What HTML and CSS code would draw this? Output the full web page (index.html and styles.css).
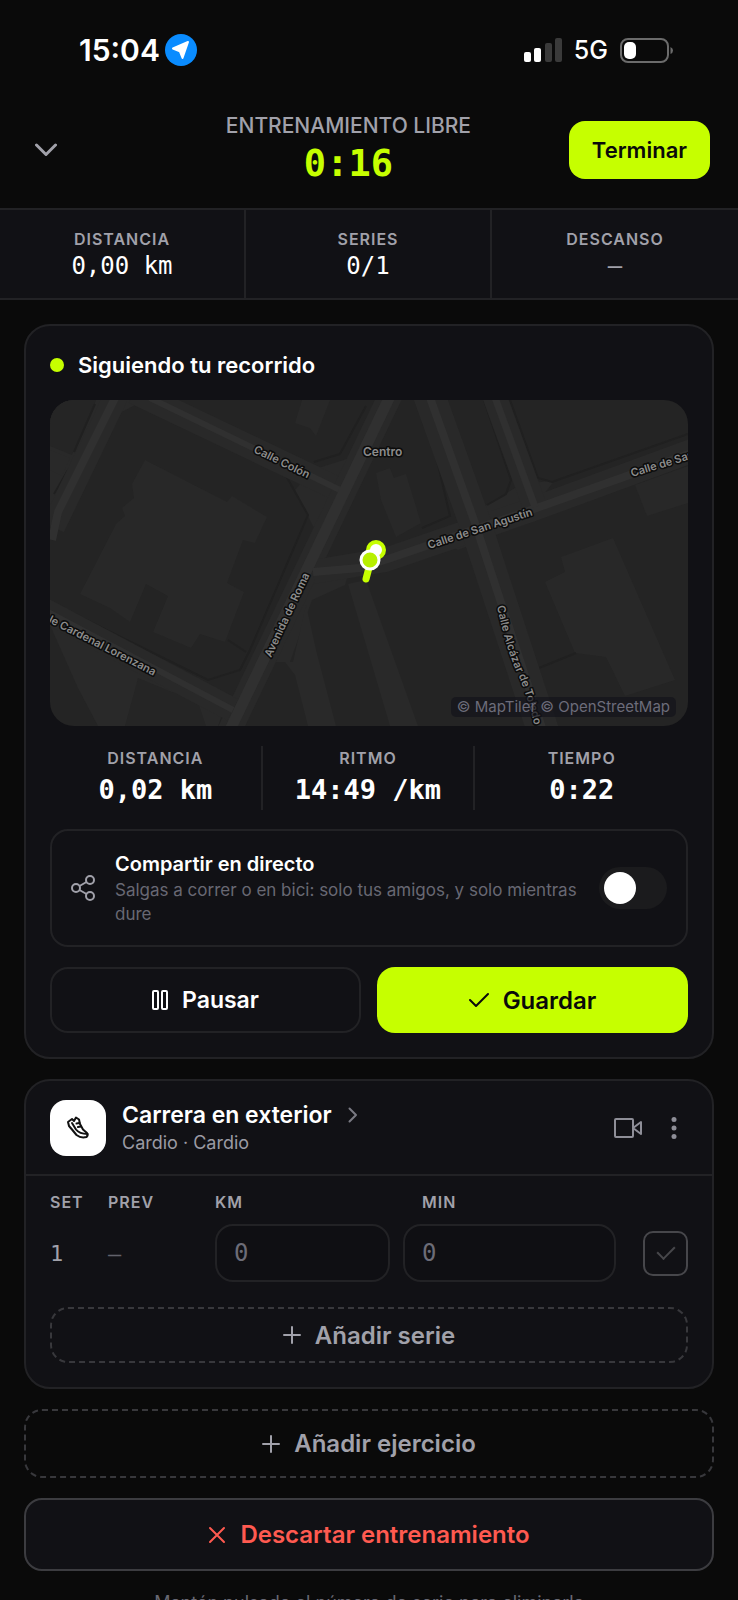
FILE: index.html
```html
<!DOCTYPE html>
<html lang="es">
<head>
  <meta charset="UTF-8" />
  <meta name="viewport" content="width=device-width, initial-scale=1" />
  <title>Entrenamiento libre</title>
  <link rel="stylesheet" href="styles.css">
</head>
<body>
  <div class="status-bar">
    <div class="status-group">
      <span class="clock">15:04</span>
      <svg class="location" width="32" height="32" viewBox="0 0 32 32">
        <circle cx="16" cy="16" r="16" fill="#0a8cff"/>
        <path d="M23 8 L17.5 24 L14.800 17.200 L8 14.500 Z" fill="#fff" stroke="#fff" stroke-width="2" stroke-linejoin="round"/>
      </svg>
    </div>
    <div class="status-group status-right">
      <svg width="38" height="24" viewBox="0 0 38 24">
        <rect x="0" y="14" width="7" height="10" rx="2" fill="#fff"/>
        <rect x="10" y="10" width="7" height="14" rx="2" fill="#fff"/>
        <rect x="21" y="5" width="7" height="19" rx="2" fill="#3a3a3a"/>
        <rect x="31" y="0" width="7" height="24" rx="2" fill="#3a3a3a"/>
      </svg>
      <span class="network">5G</span>
      <svg width="54" height="25" viewBox="0 0 54 25">
        <rect x="1" y="1" width="47" height="23" rx="7" fill="none" stroke="#6b6b6b" stroke-width="2"/>
        <rect x="4" y="4" width="12" height="17" rx="5" fill="#fff"/>
        <path d="M50.500 9 Q53 10 53 12.500 Q53 15 50.500 16 Z" fill="#6b6b6b"/>
      </svg>
    </div>
  </div>

  <header class="top">
    <button class="collapse" aria-label="Minimizar">
      <svg width="22" height="14" viewBox="0 0 22 14"><path d="M1.500 2 L11 11.500 L20.500 2" fill="none" stroke="currentColor" stroke-width="3" stroke-linecap="round" stroke-linejoin="round"/></svg>
    </button>
    <div class="top-title">
      <h1>ENTRENAMIENTO LIBRE</h1>
      <div class="timer">0:16</div>
    </div>
    <button class="finish">Terminar</button>
  </header>

  <section class="summary">
    <div><span class="label">DISTANCIA</span><span class="value">0,00 km</span></div>
    <div><span class="label">SERIES</span><span class="value">0/1</span></div>
    <div><span class="label">DESCANSO</span><span class="value muted">–</span></div>
  </section>

  <main>
    <section class="card tracking">
      <h2><span class="dot"></span>Siguiendo tu recorrido</h2>

      <div class="map">
        <svg viewBox="0 0 638 326" preserveAspectRatio="xMidYMid slice">
          <rect width="638" height="326" fill="#242424"/>
          <!-- open ground -->
          <g fill="#292929">
            <path d="M0 0 H95 L60 18 L20 90 L0 128 Z"/>
            <path d="M0 225 L80 262 L175 306 L168 326 H48 L28 288 Z"/>
            <path d="M245 90 L262 70 L300 58 L290 95 L264 128 Z"/>
            <path d="M255 160 L300 168 L295 185 L262 200 L240 262 L226 262 Z"/>
            <path d="M235 262 L243 262 L256 205 L266 250 L286 326 H258 L245 275 Z"/>
            <path d="M298 184 L316 180 L368 326 H340 Z"/>
            <path d="M388 138 L432 108 L470 85 L505 80 L470 124 L408 150 Z"/>
            <path d="M0 50 L20 58 L12 76 L0 70 Z"/>
          </g>
          <!-- blocks over the ground -->
          <g fill="#252525">
            <path d="M0 0 H46 L22 55 L0 46 Z"/>
            <path d="M88 278 L122 292 L146 296 L156 326 H75 Z"/>
          </g>
          <!-- buildings -->
          <g fill="#282828">
            <path d="M95 60 L177 102 L182 96 L217 117 L205 143 L193 140 L177 183 L194 192 L175 242 L150 234 L141 248 L103 232 L118 196 L96 184 L80 222 L60 208 L30 194 L66 124 L75 116 L72 108 L84 98 L82 84 Z"/>
            <path d="M252 0 H280 L266 36 L260 28 L245 23 Z"/>
            <path d="M326 73 L340 68 L344 78 L356 74 L371 123 L346 137 L331 100 Z"/>
            <path d="M563 138 L625 280 L575 296 L556 257 L525 253 L495 182 L515 172 L511 157 Z"/>
            <path d="M585 85 L638 66 V103 L597 116 Z"/>
          </g>
          <g fill="none" stroke="#202020" stroke-width="2">
            <path d="M107 12 L235 74 L258 115 L200 250 L190 270 L158 280 L20 212"/>
            <path d="M264 62 L290 54 L316 6"/>
            <path d="M373 0 L400 116 L372 128"/>
            <path d="M437 105 L456 94 L461 80 L434 0"/>
            <path d="M638 34 L502 82 L488 78 L460 0"/>
            <path d="M45 4 L24 52 M18 70 L4 94"/>
            <path d="M178 240 L196 252"/>
            <path d="M526 253 L484 270"/>
          </g>
          <!-- streets -->
          <g fill="none" stroke="#292929" stroke-width="24">
            <path d="M68 -8 L3 127"/>
            <path d="M84 -8 L290 90"/>
            <path d="M342 -8 L178 334"/>
            <path d="M-6 210 L183 310"/>
            <path d="M263 172 L335 160 L481 110 L644 50"/>
            <path d="M378 -8 L425 123 L494 334" stroke-width="32"/>
            <path d="M443 -8 L485 107"/>
          </g>
          <g fill="none" stroke="#303030" stroke-width="8" stroke-linejoin="round">
            <path d="M68 -8 L8 112 L2 140"/>
            <path d="M100 -2 L290 90" stroke-width="6"/>
            <path d="M342 -8 L178 334" stroke-width="11"/>
            <path d="M-6 210 L183 310" stroke-width="6"/>
            <path d="M263 172 L310 168 L335 160 L481 110 L644 52"/>
            <path d="M378 -8 L425 123 L494 334"/>
            <path d="M443 -8 L485 107" stroke-width="7"/>
          </g>
          <defs>
            <path id="alcazar" d="M447 206 Q456 250 469 277 Q479 300 488 340"/>
          </defs>
          <g class="streets">
            <text transform="translate(203 52) rotate(26)">Calle Colón</text>
            <text transform="translate(-2 222) rotate(27)">le Cardenal Lorenzana</text>
            <text transform="translate(221 258) rotate(-65)">Avenida de Roma</text>
            <text transform="translate(379 149) rotate(-18)">Calle de San Agustín</text>
            <text transform="translate(582 77) rotate(-17)">Calle de San</text>
            <text><textPath href="#alcazar">Calle Alcázar de Toledo</textPath></text>
            <text class="district" x="313" y="56">Centro</text>
          </g>
          <!-- route -->
          <path d="M321 160 L316 179" stroke="#c6ff00" stroke-width="7" stroke-linecap="round"/>
          <circle cx="326" cy="150" r="8" fill="#fff" stroke="#c6ff00" stroke-width="4"/>
          <circle cx="320" cy="160" r="9" fill="#b8f000" stroke="#fff" stroke-width="3"/>
        </svg>
        <span class="credits">© MapTiler © OpenStreetMap</span>
      </div>

      <div class="live-stats">
        <div><span class="label">DISTANCIA</span><span class="value">0,02 km</span></div>
        <div><span class="label">RITMO</span><span class="value">14:49 /km</span></div>
        <div><span class="label">TIEMPO</span><span class="value">0:22</span></div>
      </div>

      <div class="share">
        <svg width="24" height="26" viewBox="0 0 24 26" fill="none" stroke="currentColor" stroke-width="2">
          <circle cx="5" cy="13" r="4"/>
          <circle cx="19" cy="5" r="4"/>
          <circle cx="19" cy="21" r="4"/>
          <path d="M8.500 11 L15.500 7 M8.500 15 L15.500 19"/>
        </svg>
        <label class="share-text" for="share-live">
          <strong>Compartir en directo</strong>
          <span>Salgas a correr o en bici: solo tus amigos, y solo mientras dure</span>
        </label>
        <input class="toggle" type="checkbox" role="switch" id="share-live">
      </div>

      <div class="actions">
        <button class="pause">
          <svg width="16" height="20" viewBox="0 0 16 20" fill="none" stroke="currentColor" stroke-width="2"><rect x="1" y="1" width="5" height="18" rx="1"/><rect x="10" y="1" width="5" height="18" rx="1"/></svg>
          Pausar
        </button>
        <button class="save">
          <svg width="20" height="16" viewBox="0 0 20 16" fill="none" stroke="currentColor" stroke-width="2" stroke-linecap="round" stroke-linejoin="round"><path d="M1 8 L7 14 L19 2"/></svg>
          Guardar
        </button>
      </div>
    </section>

    <section class="card exercise">
      <div class="exercise-head">
        <div class="thumb">
          <svg width="24" height="24" viewBox="0 0 24 24" fill="none" stroke="#111" stroke-width="2" stroke-linejoin="round" stroke-linecap="round">
            <path d="M2 6 L6 3 L8 5 L10 1.500 L13 3.500 L14 8 L17 13.500 L21 17 Q22.500 19 20.500 21 Q15 22.500 10.500 19 L6 13.500 L3 10 Z"/>
            <path d="M6 7 L10 13.500 Q13.500 18 21.500 18 M10.500 7.500 L13.500 7 M12 11 L15 10.500"/>
          </svg>
        </div>
        <div class="exercise-name">
          <h2><a href="#">Carrera en exterior
            <svg width="10" height="16" viewBox="0 0 10 16"><path d="M1.500 1.500 L8 8 L1.500 14.500" fill="none" stroke="currentColor" stroke-width="2" stroke-linecap="round" stroke-linejoin="round"/></svg></a></h2>
          <p>Cardio · Cardio</p>
        </div>
        <button class="icon-btn" aria-label="Vídeo">
          <svg width="28" height="20" viewBox="0 0 28 20" fill="none" stroke="currentColor" stroke-width="2" stroke-linejoin="round"><rect x="1" y="1" width="18" height="18" rx="1"/><path d="M19 10 L27 4 V16 Z"/></svg>
        </button>
        <button class="icon-btn" aria-label="Más opciones">
          <svg width="6" height="24" viewBox="0 0 6 24" fill="currentColor"><circle cx="3" cy="3.500" r="2.500"/><circle cx="3" cy="12" r="2.500"/><circle cx="3" cy="20.500" r="2.500"/></svg>
        </button>
      </div>

      <div class="exercise-body">
        <table>
          <thead>
            <tr>
              <th class="col-set">SET</th>
              <th class="col-prev">PREV</th>
              <th class="col-km">KM</th>
              <th class="col-min">MIN</th>
              <th class="col-done"></th>
            </tr>
          </thead>
          <tbody>
            <tr>
              <td>1</td>
              <td class="prev">–</td>
              <td class="cell-km"><input class="field" type="text" placeholder="0" aria-label="Km"></td>
              <td class="cell-min"><input class="field" type="text" placeholder="0" aria-label="Min"></td>
              <td class="cell-done"><input class="done" type="checkbox" aria-label="Serie completada"></td>
            </tr>
          </tbody>
        </table>
        <button class="add add-set">
          <svg width="18" height="18" viewBox="0 0 18 18" stroke="currentColor" stroke-width="2" stroke-linecap="round"><path d="M9 1 V17 M1 9 H17"/></svg>
          Añadir serie
        </button>
      </div>
    </section>

    <button class="add add-exercise">
      <svg width="18" height="18" viewBox="0 0 18 18" stroke="currentColor" stroke-width="2" stroke-linecap="round"><path d="M9 1 V17 M1 9 H17"/></svg>
      Añadir ejercicio
    </button>

    <button class="discard">
      <svg width="18" height="18" viewBox="0 0 18 18" stroke="currentColor" stroke-width="2" stroke-linecap="round"><path d="M2 2 L16 16 M16 2 L2 16"/></svg>
      Descartar entrenamiento
    </button>

    <p class="hint">Mantén pulsado el número de serie para eliminarla</p>
  </main>
</body>
</html>
```
FILE: styles.css
```css
* {
  box-sizing: border-box;
}

html {
  background: #0a0a0a;
}

body {
  margin: 0;
  height: 100vh;
  overflow: hidden;
  background: #0a0a0a;
  color: #fff;
  font-family: Inter, "Liberation Sans", sans-serif;
}

h1, h2, p {
  margin: 0;
}

svg {
  display: block;
  flex: none;
}

button {
  font: inherit;
  color: inherit;
  background: none;
  border: none;
  padding: 0;
  cursor: pointer;
}

/* Status bar */
.status-bar {
  display: flex;
  justify-content: space-between;
  align-items: center;
  height: 100px;
  padding: 0 64px 0 79px;
}

.status-group {
  display: flex;
  align-items: center;
  gap: 5px;
}

.status-right {
  gap: 12px;
}

.clock {
  font-size: 30px;
  font-weight: 600;
}

.network {
  font-size: 25px;
  font-weight: 500;
}

/* Header */
.top {
  display: grid;
  grid-template-columns: 104px 1fr auto;
  align-items: center;
  height: 108px;
  padding: 0 28px 8px 24px;
}

.collapse {
  display: flex;
  align-items: center;
  height: 48px;
  padding-left: 11px;
  color: #a1a1aa;
}

.top-title {
  text-align: center;
}

.top-title h1 {
  font-size: 21px;
  font-weight: 500;
  line-height: 28px;
  color: #a1a1aa;
}

.timer {
  font-family: "DejaVu Sans Mono", "Liberation Mono", monospace;
  font-size: 37px;
  font-weight: 700;
  line-height: 48px;
  color: #c6ff00;
}

.finish {
  height: 58px;
  padding: 0 23px;
  border-radius: 16px;
  background: #c6ff00;
  color: #0a0a0a;
  font-size: 22px;
  font-weight: 600;
}

/* Summary strip */
.label {
  display: block;
  font-size: 16px;
  font-weight: 600;
  line-height: 24px;
  letter-spacing: 1px;
  color: #a1a1aa;
}

.value {
  display: block;
  font-family: "DejaVu Sans Mono", "Liberation Mono", monospace;
  font-size: 24px;
  line-height: 30px;
}

.summary {
  display: grid;
  grid-template-columns: repeat(3, 1fr);
  background: #111115;
  border-top: 2px solid #222225;
  border-bottom: 2px solid #222225;
  text-align: center;
}

.summary > div {
  padding: 17px 0;
}

.summary > div:not(:last-child) {
  border-right: 2px solid #222225;
}

.muted {
  color: #a1a1aa;
}

/* Cards */
main {
  display: flex;
  flex-direction: column;
  gap: 20px;
  padding: 24px 24px 0;
}

.card {
  background: #111115;
  border: 2px solid #222225;
  border-radius: 26px;
}

.tracking {
  padding: 24px;
}

.tracking h2 {
  display: flex;
  align-items: center;
  gap: 14px;
  font-size: 22px;
  font-weight: 600;
  line-height: 30px;
}

.dot {
  width: 14px;
  height: 14px;
  border-radius: 50%;
  background: #c6ff00;
}

.map {
  position: relative;
  height: 326px;
  margin-top: 20px;
  border-radius: 24px;
  overflow: hidden;
}

.map svg {
  width: 100%;
  height: 100%;
}

.streets {
  font-size: 11px;
  font-weight: 600;
  fill: #8c8c8c;
  stroke: #0c0c0c;
  stroke-width: 3px;
  stroke-linejoin: round;
  paint-order: stroke;
}

.district {
  font-size: 12px;
}

.credits {
  position: absolute;
  right: 12px;
  bottom: 9px;
  padding: 0 6px;
  border-radius: 5px;
  background: rgba(20, 20, 27, 0.7);
  color: #6c6c7a;
  font-size: 15px;
  line-height: 20px;
}

.live-stats {
  display: grid;
  grid-template-columns: repeat(3, 1fr);
  margin-top: 20px;
  text-align: center;
}

.live-stats > div:not(:last-child) {
  border-right: 2px solid #222225;
}

.live-stats .value {
  font-size: 27px;
  font-weight: 700;
  line-height: 40px;
}

.share {
  display: flex;
  align-items: center;
  margin-top: 19px;
  padding: 19px;
  border: 2px solid #222225;
  border-radius: 18px;
  color: #a1a1aa;
}

.share-text {
  flex: 1;
  margin: 0 16px 0 20px;
  font-size: 17px;
  line-height: 24px;
  color: #686873;
}

.share-text strong {
  display: block;
  font-size: 20px;
  font-weight: 600;
  line-height: 28px;
  color: #fff;
}

.share-text span {
  display: block;
}

.toggle {
  appearance: none;
  flex: none;
  width: 68px;
  height: 42px;
  margin: 0;
  padding: 5px;
  border-radius: 21px;
  background: #1b1b1d;
}

.toggle::before {
  content: "";
  display: block;
  width: 32px;
  height: 32px;
  border-radius: 50%;
  background: #fff;
}

.toggle:checked {
  background: #c6ff00;
}

.toggle:checked::before {
  margin-left: auto;
}

.actions {
  display: grid;
  grid-template-columns: 1fr 1fr;
  gap: 16px;
  margin-top: 20px;
}

.pause, .save, .add, .discard {
  display: flex;
  align-items: center;
  justify-content: center;
  gap: 14px;
  width: 100%;
  height: 66px;
  border-radius: 18px;
  font-size: 24px;
  font-weight: 600;
}

.pause {
  border: 2px solid #222225;
  font-size: 23px;
}

.save {
  background: #c6ff00;
  color: #0a0a0a;
}

/* Exercise */
.exercise-head {
  display: flex;
  align-items: center;
  height: 95px;
  padding: 0 24px;
  border-bottom: 2px solid #222225;
}

.thumb {
  display: flex;
  align-items: center;
  justify-content: center;
  width: 56px;
  height: 56px;
  border-radius: 16px;
  background: #fff;
}

.exercise-name {
  flex: 1;
  margin-left: 16px;
}

.exercise-name h2 {
  font-size: 23px;
  font-weight: 600;
  line-height: 30px;
}

.exercise-name a {
  display: flex;
  align-items: center;
  gap: 16px;
  color: #fff;
  text-decoration: none;
}

.exercise-name a svg {
  color: #7a7a83;
}

.exercise-name p {
  font-size: 18px;
  line-height: 26px;
  color: #9b9ba4;
}

.icon-btn {
  display: flex;
  align-items: center;
  justify-content: center;
  width: 28px;
  height: 48px;
  margin-left: 18px;
  color: #8e8e97;
}

.exercise-body {
  padding: 14px 24px 24px;
}

table {
  width: 100%;
  table-layout: fixed;
  border-collapse: collapse;
}

th {
  padding: 0;
  font-size: 16px;
  font-weight: 600;
  line-height: 24px;
  letter-spacing: 1px;
  text-align: left;
  color: #a1a1aa;
}

td {
  padding: 10px 0 0;
  font-family: "DejaVu Sans Mono", "Liberation Mono", monospace;
  font-size: 22px;
  color: #a1a1aa;
}

.col-set {
  width: 58px;
}

.col-prev {
  width: 107px;
}

.col-km {
  width: 188px;
}

.col-min {
  padding-left: 19px;
}

.col-done {
  width: 72px;
}

.prev {
  color: #62626b;
}

.cell-km {
  padding-right: 13px;
}

.field {
  display: block;
  width: 100%;
  height: 58px;
  padding: 0 17px;
  border: 2px solid #222225;
  border-radius: 18px;
  background: #0f0f13;
  color: #fff;
  font-family: inherit;
  font-size: 24px;
}

.field::placeholder {
  color: #6c6c77;
}

.done {
  appearance: none;
  display: flex;
  align-items: center;
  justify-content: center;
  width: 45px;
  height: 45px;
  margin: 0 0 0 auto;
  border: 2px solid #47474b;
  border-radius: 10px;
}

.done::before {
  content: "";
  width: 8px;
  height: 15px;
  margin-bottom: 5px;
  border: solid #47474b;
  border-width: 0 2px 2px 0;
  transform: rotate(45deg);
}

.done:checked {
  background: #c6ff00;
}

/* Buttons at the bottom */
.add {
  border: 2px dashed #38383c;
  color: #a1a1aa;
}

.add-set {
  height: 56px;
  margin-top: 25px;
}

.add-exercise {
  height: 69px;
}

.discard {
  height: 73px;
  border: 2px solid #3c3c40;
  background: #111115;
  color: #ff5a50;
}

.hint {
  font-size: 18px;
  line-height: 24px;
  text-align: center;
  color: #686873;
}
```
